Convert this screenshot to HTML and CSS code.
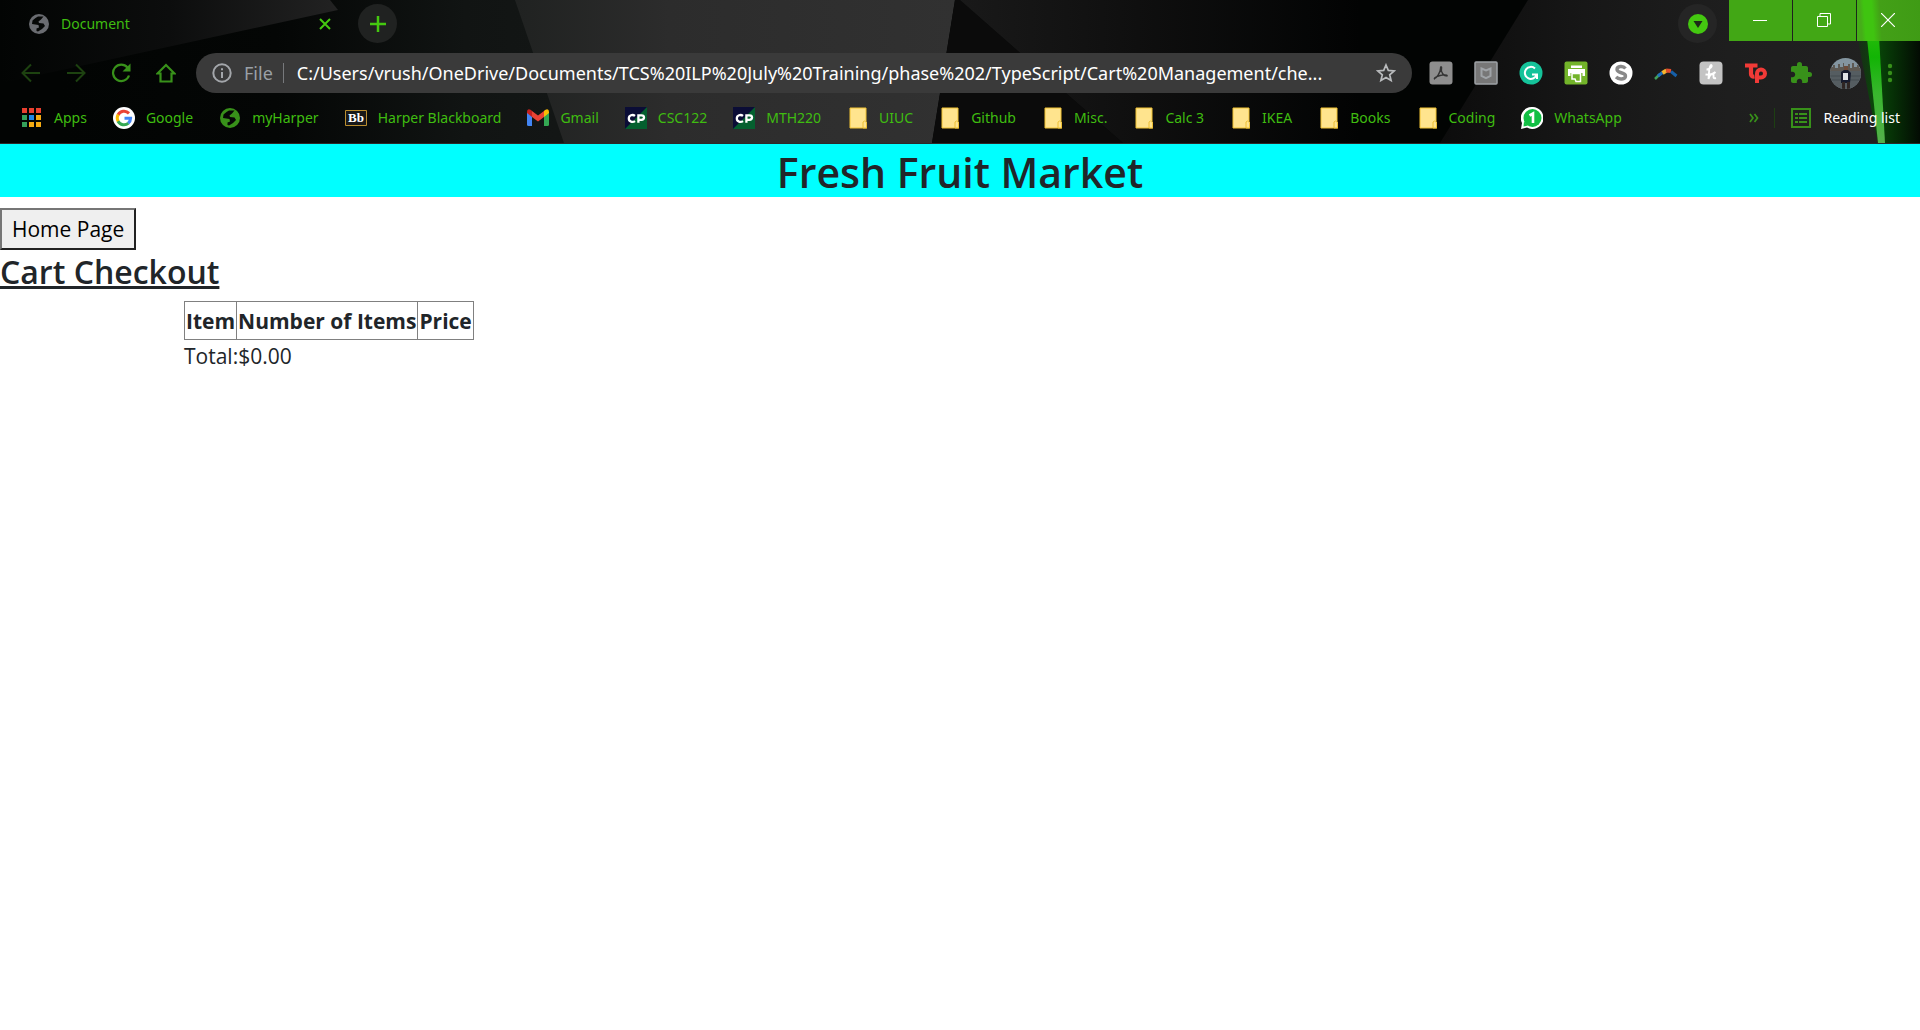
FILE: index.html
```html
<!DOCTYPE html>
<html lang="en">
<head>
<meta charset="utf-8">
<title>Document</title>
<link rel="stylesheet" href="styles.css">
</head>
<body>
<svg class="defs" width="0" height="0" aria-hidden="true">
  <defs>
    <symbol id="folder" viewBox="0 0 18 22">
      <path d="M1 1h16v13.500l1 1V21H1z" fill="#ffe48e" stroke="#f1c232"/>
      <path d="M14 21v-6l1.500-1 2 1.500V21z" fill="#ffe48e" stroke="#eec035"/>
    </symbol>
    <symbol id="globe" viewBox="0 0 20 20">
      <circle cx="10" cy="10" r="10" fill="currentColor"/>
      <path d="M9 2.500h5.500L12 5.500 9.500 7.500l.5 1.500 4.500.5 1.500 2.500-3 3-4 2.500-1.500-.5v-2.500l2.500-1-.5-2.500L3 10l.5-3.500L6.500 4z" fill="#060807"/>
      <path d="M5.500 6.500 8 5v3l-1.500 1-2-.5z" fill="#060807"/>
    </symbol>
    <symbol id="cp" viewBox="0 0 23 23">
      <path d="M0 0h23v23H0z" fill="#0b0d36"/>
      <path d="M23 0v23H0z" fill="#04602f"/>
      <path d="M10.500 9.300C8 7.500 4 8.500 4 12s4 4.500 6.500 2.700M14 16.500V8.700h3.200c3.600 0 3.600 4.800 0 4.800H14" fill="none" stroke="#fff" stroke-width="2.400"/>
    </symbol>
  </defs>
</svg>

<header class="browser">
  <svg class="theme" viewBox="0 0 1920 144" preserveAspectRatio="none" aria-hidden="true">
    <defs>
      <linearGradient id="g1"><stop offset="0" stop-color="#020403"/><stop offset=".5" stop-color="#0c0d0d"/><stop offset="1" stop-color="#222"/></linearGradient>
      <linearGradient id="g2"><stop offset="0" stop-color="#020403"/><stop offset=".4" stop-color="#040605"/><stop offset=".75" stop-color="#111413"/><stop offset="1" stop-color="#141716"/></linearGradient>
      <linearGradient id="g3"><stop offset="0" stop-color="#202221"/><stop offset=".35" stop-color="#2c2c2c"/><stop offset="1" stop-color="#313131"/></linearGradient>
      <linearGradient id="g4"><stop offset="0" stop-color="#191919"/><stop offset=".4" stop-color="#101010"/><stop offset="1" stop-color="#020303"/></linearGradient>
      <linearGradient id="g5"><stop offset="0" stop-color="#0c0c0c"/><stop offset=".3" stop-color="#171717"/><stop offset=".6" stop-color="#1e1e1e"/><stop offset="1" stop-color="#222"/></linearGradient>
      <linearGradient id="g6"><stop offset="0" stop-color="#0a3d08" stop-opacity="0"/><stop offset=".35" stop-color="#084a08"/><stop offset="1" stop-color="#030b03"/></linearGradient>
      <linearGradient id="g7" x2="0" y2="1"><stop offset="0" stop-color="#3fc80f"/><stop offset=".4" stop-color="#12b405"/><stop offset=".65" stop-color="#38b62d"/><stop offset="1" stop-color="#55b04c"/></linearGradient>
    </defs>
    <path d="M0 0h1920v144H0z" fill="#020403"/>
    <path d="M300 0h300v144H60V70L336 10z" fill="url(#g2)"/>
    <path d="M0 0h330l8 10L0 84z" fill="url(#g1)"/>
    <path d="M515 0h440l-23 144H564z" fill="url(#g3)"/>
    <path d="M955 0h5l163 144H932z" fill="#0b0b0b"/>
    <path d="M960 0h400v144h-237z" fill="url(#g4)"/>
    <path d="M1528 0h392v144h-480z" fill="url(#g5)"/>
    <path d="M1850 0h70v144h-42z" fill="url(#g6)"/>
    <path d="M1863 0h14l8 144h-7z" fill="url(#g7)"/>
  </svg>

  <div class="tabstrip">
    <div class="tab">
      <svg class="favicon" width="20" height="20"><use href="#globe"/></svg>
      <span class="tab-title">Document</span>
      <button class="plain close" aria-label="Close tab"><svg width="12" height="12" viewBox="0 0 12 12"><path d="M1 1l10 10M11 1 1 11" stroke="#44c810" stroke-width="2"/></svg></button>
    </div>
    <button class="plain round" aria-label="New tab"><svg width="16" height="16" viewBox="0 0 16 16"><path d="M8 0v16M0 8h16" stroke="#44c810" stroke-width="2.500"/></svg></button>
    <button class="plain round search-tabs" aria-label="Search tabs"><svg width="20" height="20" viewBox="0 0 20 20"><circle cx="10" cy="10" r="10" fill="#44c810"/><path d="M5.500 7h9L10 14z" fill="#1c2a18"/></svg></button>
    <div class="caption">
      <button class="plain win" aria-label="Minimize"><svg width="14" height="14" viewBox="0 0 14 14"><path d="M0 7.500h14" stroke="#fff"/></svg></button>
      <button class="plain win" aria-label="Restore"><svg width="14" height="14" viewBox="0 0 14 14"><path d="M.5 3.500h10v10H.500zM3 3.500V.5h10.500V11H11" fill="none" stroke="#fff"/></svg></button>
      <button class="plain win win-close" aria-label="Close"><svg width="14" height="14" viewBox="0 0 14 14"><path d="M0 0l14 14M14 0 0 14" stroke="#fff" stroke-width="1.200"/></svg></button>
    </div>
  </div>

  <div class="toolbar">
    <button class="plain tool dim" aria-label="Back"><svg width="20" height="20" viewBox="0 0 20 20"><path d="M10 1.500 1.500 10l8.500 8.500M1.500 10H19" fill="none" stroke="currentColor" stroke-width="2"/></svg></button>
    <button class="plain tool dim" aria-label="Forward"><svg width="20" height="20" viewBox="0 0 20 20"><path d="M10 1.500l8.500 8.500-8.500 8.500M18.500 10H1" fill="none" stroke="currentColor" stroke-width="2"/></svg></button>
    <button class="plain tool" aria-label="Reload"><svg width="20" height="20" viewBox="0 0 20 20"><path d="M16.500 4.500A8.200 8.200 0 1 0 18 12.500" fill="none" stroke="currentColor" stroke-width="2.200"/><path d="M19.500.5V8.500h-8z" fill="currentColor"/></svg></button>
    <button class="plain tool" aria-label="Home"><svg width="20" height="20" viewBox="0 0 20 20"><path d="M1.500 10.500 10 2l8.500 8.500h-3V18.500h-11v-8z" fill="none" stroke="currentColor" stroke-width="2.200"/></svg></button>
    <form class="omnibox">
      <svg class="info" width="20" height="20" viewBox="0 0 20 20"><circle cx="10" cy="10" r="8.700" fill="none" stroke="#a3a6aa" stroke-width="2"/><path d="M10 9v6M10 5.300v2" stroke="#a3a6aa" stroke-width="2"/></svg>
      <label class="scheme" for="url">File</label>
      <input class="url" id="url" type="text" spellcheck="false" value="C:/Users/vrush/OneDrive/Documents/TCS%20ILP%20July%20Training/phase%202/TypeScript/Cart%20Management/che...">
      <button class="plain star" type="button" aria-label="Bookmark this page"><svg width="20" height="20" viewBox="0 0 20 20"><path d="M10 2l2.300 5.400 5.900.5-4.500 3.900 1.400 5.700L10 14.500l-5.100 3 1.400-5.700L1.800 7.900l5.900-.5z" fill="none" stroke="#b9bbbd" stroke-width="1.700"/></svg></button>
    </form>
    <button class="plain tool" aria-label="Acrobat"><svg width="24" height="24" viewBox="0 0 24 24"><rect x=".5" y=".5" width="23" height="23" rx="3" fill="#8e8e8e"/><path d="M5.500 17.500c2-.5 6-6 6-10 0-2.500 1.500-2 1 0-1 4 2 7.500 6 7.500M6 18c-1.500 0-.5-2 5-3.500 3-.8 7-.8 7.500.2" fill="none" stroke="#333" stroke-width="1.400"/></svg></button>
    <button class="plain tool" aria-label="WebAdvisor"><svg width="24" height="24" viewBox="0 0 24 24"><rect x="1" y="1" width="22" height="22" rx="1" fill="#777" stroke="#9fa3a7" stroke-width="1.500"/><path d="M7.500 7.500 12 9.500l4.500-2V15L12 17.200 7.500 15z" fill="none" stroke="#9fa3a7" stroke-width="2"/></svg></button>
    <button class="plain tool" aria-label="Grammarly"><svg width="24" height="24" viewBox="0 0 24 24"><circle cx="12" cy="12" r="11.500" fill="#15c39a"/><path d="M16 7.500A6 6 0 1 0 17.500 14M13 13.500h5V18" fill="none" stroke="#fff" stroke-width="2"/></svg></button>
    <button class="plain tool" aria-label="Print Friendly"><svg width="24" height="24" viewBox="0 0 24 24"><rect x=".5" y=".5" width="23" height="23" rx="2" fill="#73b42a"/><path d="M7 4.500h11V7H7zM4 8h17v7h-2.500v-3H6.500v3H4z" fill="#fff"/><path d="M8 12.500h8.500v8H12L11 18H8z" fill="#73b42a" stroke="#fff" stroke-width="1.500"/></svg></button>
    <button class="plain tool" aria-label="S extension"><svg width="24" height="24" viewBox="0 0 24 24"><circle cx="12" cy="12" r="11.500" fill="#fff"/><path d="M16.500 7.500C14 4.500 8 5 8 8.500c0 4 8.500 2.500 8.500 6.500 0 3.500-6.500 4-9.500 1" fill="none" stroke="#898989" stroke-width="3.400"/></svg></button>
    <button class="plain tool" aria-label="Boomerang"><svg width="24" height="24" viewBox="0 0 24 24"><path d="M1 18l5-5" stroke="#41a05b" stroke-width="2.500"/><path d="M4 15l4.500-3.500" stroke="#1f6fc0" stroke-width="3"/><path d="M8.500 12l4-2.500" stroke="#f6b630" stroke-width="4"/><path d="M12 9.500l5 .5" stroke="#e04b2c" stroke-width="4"/><path d="M17 10.500l5.500 4.500" stroke="#155fa8" stroke-width="3"/></svg></button>
    <button class="plain tool" aria-label="Honey"><svg width="24" height="24" viewBox="0 0 24 24"><rect x=".5" y=".5" width="23" height="23" rx="4" fill="#c3c3c3"/><path d="M7.500 8.500c4 0 6.500-4 4.500-4.500-2 0-2 8-2.500 14 1-4 4.500-7 5-4.500.3 2-1 4.500 2.500 3.500M6.500 13.500c4 .5 8-.5 10-2.500" fill="none" stroke="#fff" stroke-width="1.900"/></svg></button>
    <button class="plain tool" aria-label="Toucan"><svg width="24" height="24" viewBox="0 0 24 24"><path d="M1 4.500h12.500M7 4.500V13q0 3 3.500 2.500" fill="none" stroke="#f13a37" stroke-width="4.200"/><path d="M13 22v-9.500a4 4 0 1 1 4 4h-4" fill="none" stroke="#f13a37" stroke-width="4"/></svg></button>
    <button class="plain tool" aria-label="Extensions"><svg width="24" height="24" viewBox="0 0 24 24"><path d="M20.500 11H19V7c0-1.100-.9-2-2-2h-4V3.500a2.500 2.500 0 0 0-5 0V5H4c-1.100 0-1.990.9-1.990 2v3.800H3.500c1.490 0 2.700 1.210 2.700 2.700s-1.210 2.700-2.700 2.700H2V20c0 1.100.9 2 2 2h3.800v-1.500c0-1.490 1.210-2.700 2.700-2.700s2.700 1.210 2.700 2.700V22H17c1.100 0 2-.9 2-2v-4h1.500a2.500 2.500 0 0 0 0-5z" fill="currentColor"/></svg></button>
    <button class="plain tool" aria-label="Profile"><svg width="31" height="31" viewBox="0 0 31 31"><defs><clipPath id="av"><circle cx="15.500" cy="15.500" r="15.500"/></clipPath></defs><g clip-path="url(#av)"><path d="M0 0h31v31H0z" fill="#8495a0"/><path d="M0 12V9h3V7h2v3h3V6h2v3h3V5h1v4h4V6h2v4h2V5h2v4h3V7h2v3h2v4H0z" fill="#5d5953"/><path d="M0 13h31v18H0z" fill="#555d61"/><path d="M0 18h31M0 22h31" stroke="#454c50"/><path d="M14 8h4v4h-4z" fill="#6d4c3b"/><path d="M11 14l3-2h4l3 3-1 10h-9z" fill="#161b2d"/><path d="M13 15h5v7h-5z" fill="#dfe2e6"/><path d="M12 24h3v7h-3zM17 24h3v7h-3z" fill="#2e2523"/></g></svg></button>
    <button class="plain tool" aria-label="Menu"><svg width="20" height="20" viewBox="0 0 20 20"><g fill="currentColor"><circle cx="9" cy="3" r="2.200"/><circle cx="9" cy="10" r="2.200"/><circle cx="9" cy="17" r="2.200"/></g></svg></button>
  </div>

  <nav class="bookmarks" aria-label="Bookmarks">
    <a class="bookmark" href="#"><svg width="22" height="22" viewBox="0 0 22 22"><path d="M1 1h5v5H1zM8 1h5v5H8zM15 1h5v5h-5z" fill="#e8402f"/><path d="M1 8h5v5H1zM1 15h5v5H1z" fill="#34a05a"/><path d="M8 8h5v5H8z" fill="#2188e8"/><path d="M15 8h5v5h-5zM8 15h5v5H8zM15 15h5v5h-5z" fill="#f5ab12"/></svg>Apps</a>
    <a class="bookmark" href="#"><svg width="22" height="22" viewBox="0 0 22 22"><circle cx="11" cy="11" r="11" fill="#fff"/><g fill="none" stroke-width="3"><path d="M16 6.400A6.800 6.800 0 0 0 5 8" stroke="#ea4335"/><path d="M5.200 7.600a6.800 6.800 0 0 0 0 6.800" stroke="#fbbc05"/><path d="M5 14.200a6.800 6.800 0 0 0 10.500 1.900" stroke="#34a853"/><path d="M15.300 16.200a6.800 6.800 0 0 0 2.300-5H11.500" stroke="#4285f4"/></g></svg>Google</a>
    <a class="bookmark" href="#"><svg class="green" width="22" height="20"><use href="#globe"/></svg>myHarper</a>
    <a class="bookmark" href="#"><svg width="22" height="16" viewBox="0 0 22 16"><path d="M.5.500h21v15H.500z" fill="#181818" stroke="#b98d2f"/><text class="bb" x="11" y="12" text-anchor="middle">Bb</text></svg>Harper Blackboard</a>
    <a class="bookmark" href="#"><svg width="22" height="17" viewBox="0 0 22 17"><path d="M0 3v12.500q0 1.500 1.500 1.500H5V6z" fill="#4285f4"/><path d="M22 3v12.500q0 1.500-1.500 1.500H17V6z" fill="#34a853"/><path d="M5 2v6l6 4.500L17 8V2l-6 4.500z" fill="#ea4335"/><path d="M0 3q0-4 4-2l1 1v6L0 4z" fill="#c5221f"/><path d="M22 3q0-4-4-2l-1 1v6l5-4z" fill="#fbbc04"/></svg>Gmail</a>
    <a class="bookmark" href="#"><svg width="22" height="22"><use href="#cp"/></svg>CSC122</a>
    <a class="bookmark" href="#"><svg width="22" height="22"><use href="#cp"/></svg>MTH220</a>
    <a class="bookmark" href="#"><svg class="folder" width="18" height="22"><use href="#folder"/></svg>UIUC</a>
    <a class="bookmark" href="#"><svg class="folder" width="18" height="22"><use href="#folder"/></svg>Github</a>
    <a class="bookmark" href="#"><svg class="folder" width="18" height="22"><use href="#folder"/></svg>Misc.</a>
    <a class="bookmark" href="#"><svg class="folder" width="18" height="22"><use href="#folder"/></svg>Calc 3</a>
    <a class="bookmark" href="#"><svg class="folder" width="18" height="22"><use href="#folder"/></svg>IKEA</a>
    <a class="bookmark" href="#"><svg class="folder" width="18" height="22"><use href="#folder"/></svg>Books</a>
    <a class="bookmark" href="#"><svg class="folder" width="18" height="22"><use href="#folder"/></svg>Coding</a>
    <a class="bookmark" href="#"><svg width="22" height="22" viewBox="0 0 22 22"><path d="M11 0a11 11 0 1 1-5 20.500L0 22l1-6A11 11 0 0 1 11 0z" fill="#fff"/><circle cx="11.500" cy="11" r="9" fill="#10bf43"/><path d="M3 14.500 2.500 19.500l4.500-1z" fill="#10bf43"/><path d="M8.500 8.500l3.500-2V16" fill="none" stroke="#fff" stroke-width="2.600"/></svg>WhatsApp</a>
    <button class="plain more" aria-label="More bookmarks"><svg width="10" height="10" viewBox="0 0 10 10"><path d="M1 1l3 4-3 4M5.500 1l3 4-3 4" fill="none" stroke="currentColor" stroke-width="1.700"/></svg></button>
    <button class="plain reading"><svg width="20" height="20" viewBox="0 0 20 20"><path d="M1 1h18v18H1z" fill="none" stroke="#38911a" stroke-width="2"/><path d="M4 6h3M4 10h3M4 14h3M8 6h8M8 10h8M8 14h8" stroke="#38911a" stroke-width="2"/></svg>Reading list</button>
  </nav>
</header>

<main>
  <h1 class="banner">Fresh Fruit Market</h1>
  <button class="home">Home Page</button>
  <h2 class="heading">Cart Checkout</h2>
  <section class="cart">
    <table class="items">
      <thead><tr><th scope="col">Item</th><th scope="col">Number of Items</th><th scope="col">Price</th></tr></thead>
    </table>
    <p class="total">Total:$0.00</p>
  </section>
</main>
</body>
</html>
```
FILE: styles.css
```css
* { box-sizing: border-box; }

body {
  margin: 0;
  background: #fff;
  color: #212529;
  font-family: "Open Sans", "Noto Sans", sans-serif;
  font-size: 21px;
  line-height: 32px;
}

svg { display: block; flex: none; }
.defs { position: absolute; }

.plain {
  display: flex;
  align-items: center;
  justify-content: center;
  margin: 0;
  padding: 0;
  border: 0;
  background: none;
  color: inherit;
  font: inherit;
}

/* Browser frame */
.browser {
  position: relative;
  isolation: isolate;
  border-bottom: 1px solid #2a2a2a;
  background: #020403;
  color: #38911a;
  font-family: "Noto Sans", "Open Sans", sans-serif;
  font-size: 14px;
  line-height: 20px;
}

.theme {
  position: absolute;
  inset: 0;
  z-index: -1;
  width: 100%;
  height: 100%;
}

.tabstrip { display: flex; height: 48px; }

.tab {
  display: flex;
  align-items: center;
  width: 346px;
  padding: 0 15px 0 29px;
}

.favicon { color: #6a6c71; }
.tab-title { flex: 1; margin-left: 12px; color: #3fbd10; }

.round {
  width: 39px;
  height: 39px;
  margin: 4px 0 0 12px;
  border-radius: 50%;
  background: #202221;
}

.search-tabs { margin-left: auto; margin-right: 12px; background: #252525; }

.caption { display: flex; gap: 1px; height: 41px; }
.win { width: 63px; padding: 0 1px 1px 0; background: #42a715; }
.win-close { background: linear-gradient(86deg, #46ad19 8%, #3fc410 14%, #3fc410 26%, #43a017 38%, #3f9b15); }

.toolbar { display: flex; align-items: center; height: 50px; padding: 0 7px 0 8px; }
.tool { flex: none; width: 45px; height: 45px; }
.dim { color: #1d4210; }

.omnibox {
  display: flex;
  flex: 1;
  align-items: center;
  height: 40px;
  min-width: 0;
  margin: 0 6px 0 8px;
  padding: 0 16px;
  border-radius: 20px;
  background: #3a3a3a;
  font-size: 18px;
}

.scheme {
  margin-left: 12px;
  padding-right: 10px;
  border-right: 1px solid #77797c;
  color: #9aa0a6;
}

.url {
  flex: 1;
  min-width: 0;
  height: 28px;
  padding: 0 0 0 13px;
  border: 0;
  outline: 0;
  background: none;
  color: #fff;
  font: inherit;
}

.bookmarks { display: flex; align-items: center; height: 45px; padding: 0 20px 6px 21px; }

.bookmark {
  display: flex;
  align-items: center;
  gap: 11px;
  margin-right: 26px;
  color: #3fbd10;
  text-decoration: none;
  white-space: nowrap;
}

.green { color: #38911a; }
.folder { margin: 0 1px 0 2px; }
.bb { fill: #fff; font: bold 13px "Liberation Serif", serif; }
.more { width: 24px; margin-left: auto; margin-right: 8px; }

.reading {
  gap: 12px;
  padding-left: 16px;
  border-left: 1px solid #1d3f12;
  color: #fff;
  white-space: nowrap;
}

/* Page */
.banner,
.heading {
  font-weight: 600;
}

.banner {
  margin: 0 0 11px;
  padding-top: 3px;
  background: #0ff;
  font-size: 41px;
  line-height: 50px;
  text-align: center;
}

.home {
  display: block;
  height: 42px;
  padding: 0 10px;
  border: 2px solid;
  border-color: #767676 #212121 #212121 #767676;
  background: #efefef;
  color: #000;
  font: inherit;
}

.heading {
  margin: 0 0 7px;
  font-size: 32px;
  line-height: 44px;
  text-decoration: underline;
}

.cart { padding-left: 184px; }
.items { border-collapse: collapse; }
.items th { padding: 3px 1px 2px; border: 1px solid #808080; }
.items th:last-child { border-left-color: #333; }
.total { margin: 0; }
```
